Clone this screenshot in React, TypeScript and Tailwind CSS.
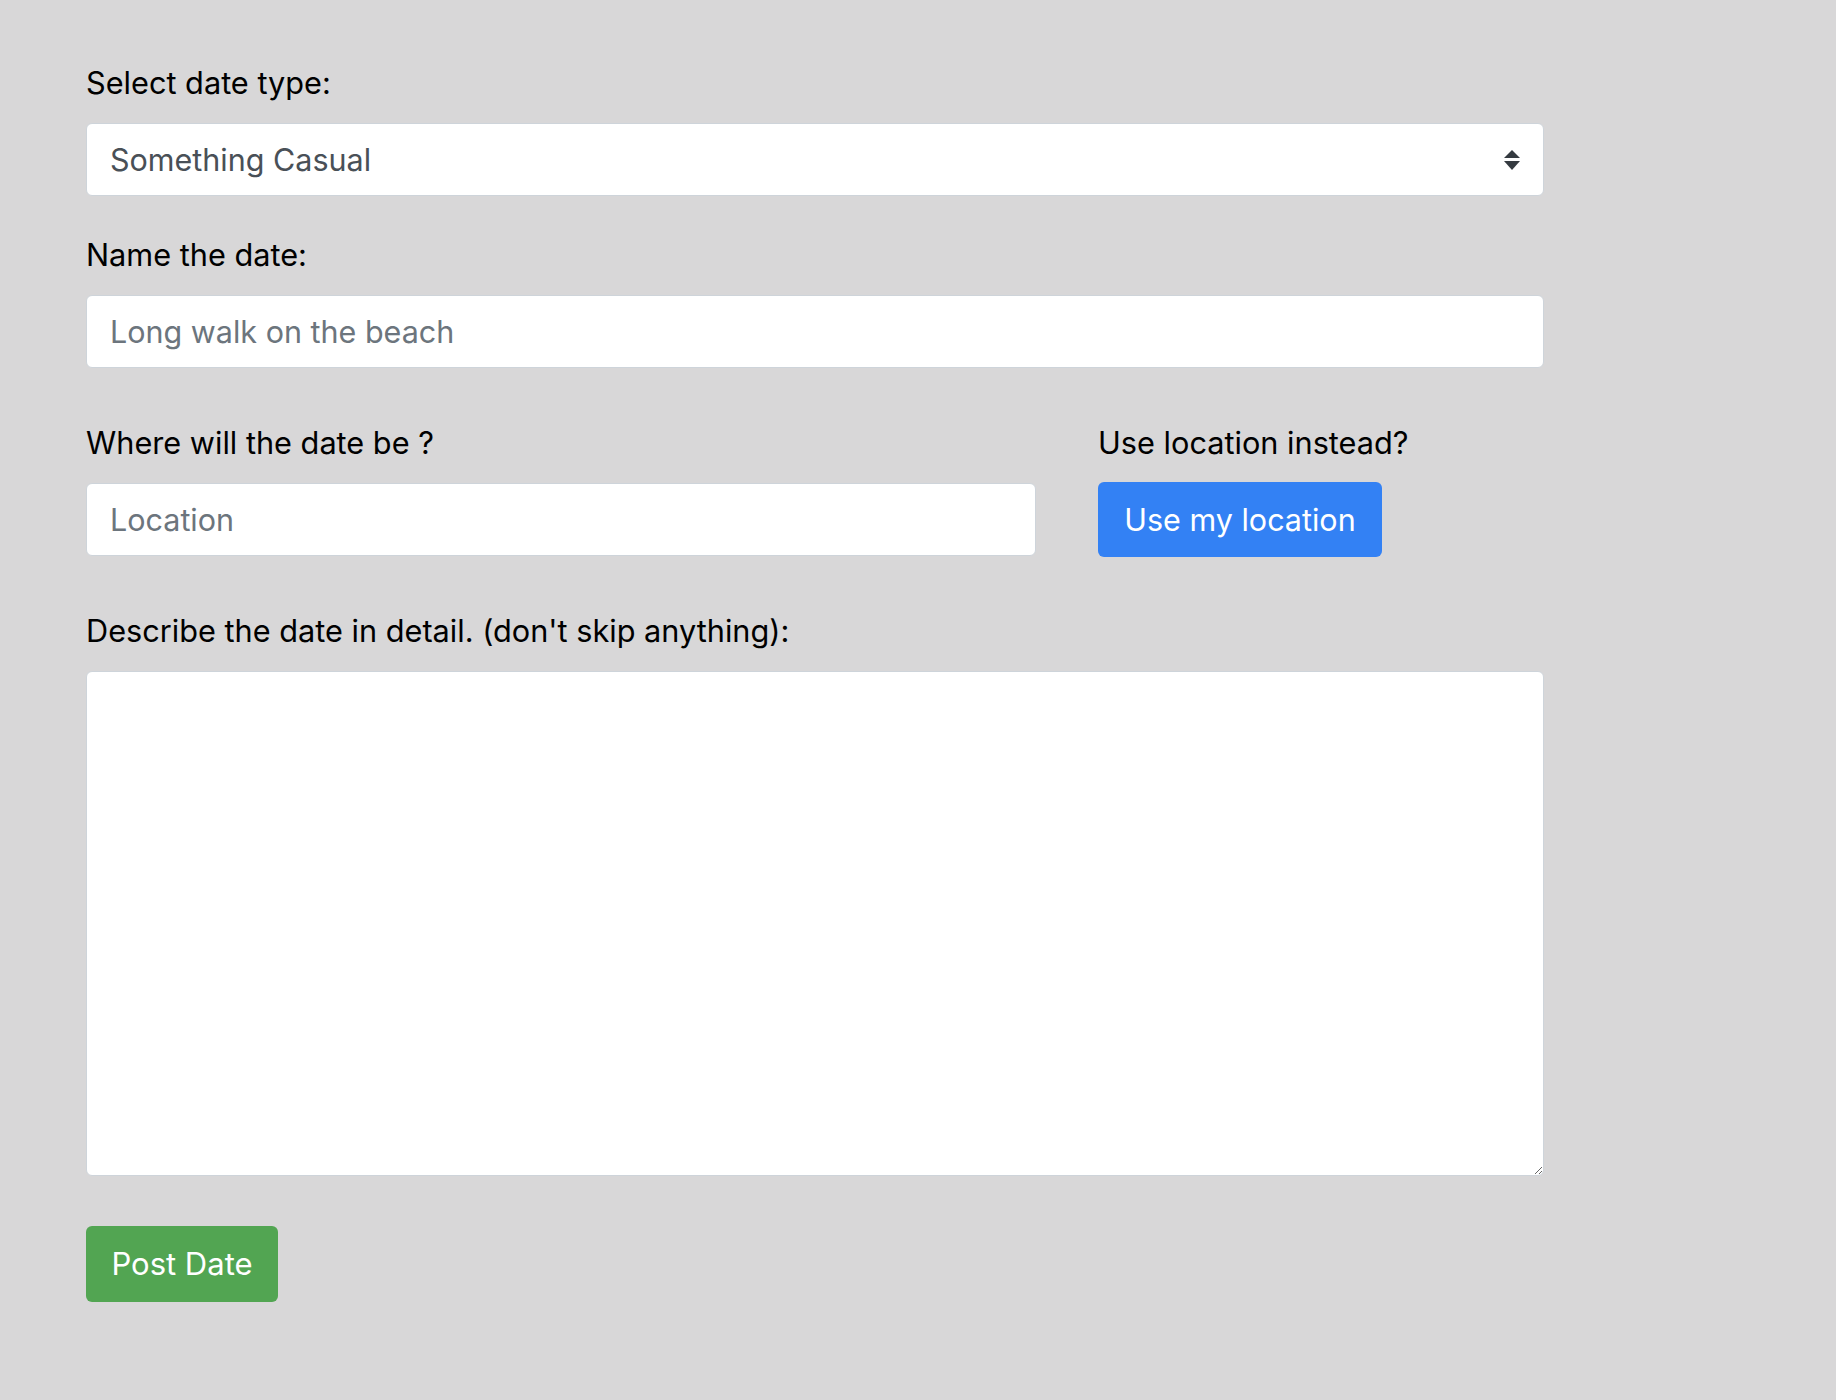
import React from "react";

function Label({ children }: { children: React.ReactNode }) {
  return <label className="block text-[30.7px] leading-[45px] text-black">{children}</label>;
}

function SelectArrows() {
  return (
    <svg width="16" height="20" viewBox="0 0 16 20" className="absolute right-[24px] top-1/2 -translate-y-1/2">
      <path d="M8 0 L16 8 L0 8 Z" fill="#343a40" />
      <path d="M0 11 L16 11 L8 20 Z" fill="#343a40" />
    </svg>
  );
}

export default function App() {
  const inputCls =
    "block w-full h-[73px] rounded-[6px] border border-[#ced4da] bg-white px-[23px] text-[30.5px] text-[#495057] placeholder:text-[#6c757d] outline-none";

  return (
    <div
      className="min-h-[1400px] w-full bg-[#d8d7d8] pl-[86px] pt-[60px]"
      style={{ fontFamily: "Inter, 'Noto Sans', sans-serif" }}
    >
      <form className="w-[1458px]" onSubmit={(e) => e.preventDefault()}>
        <div>
          <Label>Select date type:</Label>
          <div className="relative mt-[18px]">
            <select className={inputCls + " appearance-none"} defaultValue="casual">
              <option value="casual">Something Casual</option>
              <option value="fancy">Something Fancy</option>
            </select>
            <SelectArrows />
          </div>
        </div>

        <div className="mt-[36px]">
          <Label>Name the date:</Label>
          <input className={inputCls + " mt-[18px]"} placeholder="Long walk on the beach" />
        </div>

        <div className="mt-[52px] flex items-start gap-[62px]">
          <div className="w-[950px]">
            <Label>Where will the date be ?</Label>
            <input className={inputCls + " mt-[18px]"} placeholder="Location" />
          </div>
          <div>
            <Label>Use location instead?</Label>
            <button
              type="button"
              className="mt-[17px] h-[75px] w-[284px] rounded-[6px] bg-[#3381f4] text-[30.5px] text-white"
            >
              Use my location
            </button>
          </div>
        </div>

        <div className="mt-[51px]">
          <Label>Describe the date in detail. (don't skip anything):</Label>
          <textarea className="mt-[18px] block h-[505px] w-full rounded-[6px] border border-[#ced4da] bg-white px-[23px] py-[12px] text-[30.5px] text-[#495057] outline-none" />
        </div>

        <button
          type="submit"
          className="mt-[50px] h-[76px] w-[192px] rounded-[6px] bg-[#52a552] text-[31px] text-white"
        >
          Post Date
        </button>
      </form>
    </div>
  );
}
